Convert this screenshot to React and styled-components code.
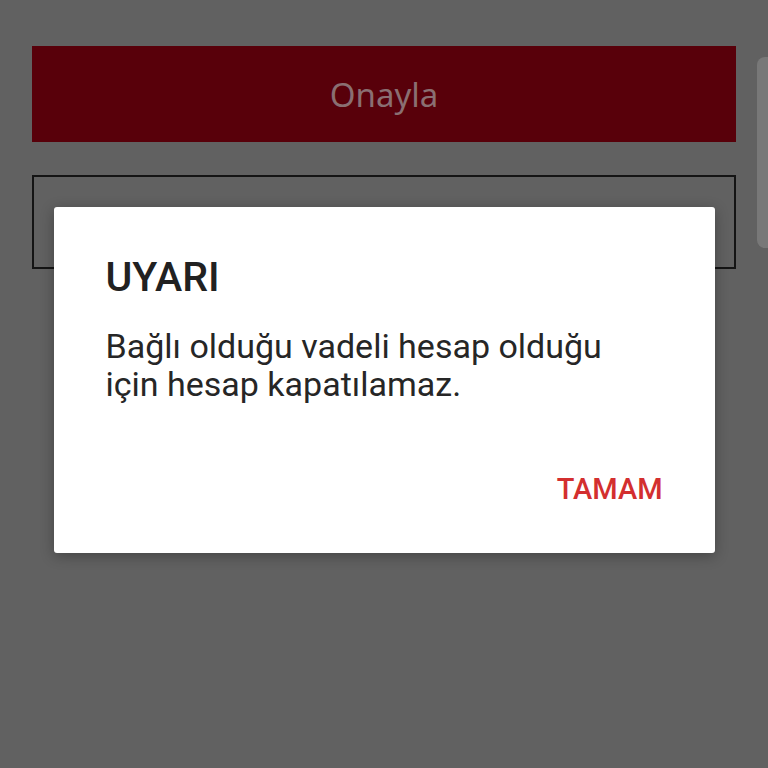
import React from "react";
import styled, { createGlobalStyle } from "styled-components";

const GlobalStyle = createGlobalStyle`
  html, body {
    margin: 0;
    padding: 0;
    background: #616161;
  }
  body {
    font-family: Roboto, "Noto Sans", sans-serif;
  }
`;

const Screen = styled.div`
  position: relative;
  width: 768px;
  height: 768px;
  overflow: hidden;
  background: #616161;
`;

const Content = styled.div`
  display: flex;
  flex-direction: column;
  gap: 33px;
  padding: 46px 32px 0 32px;
`;

const ConfirmButton = styled.div`
  height: 96px;
  background: #58000a;
  color: #8a6f72;
  font-size: 33px;
  display: flex;
  align-items: center;
  justify-content: center;
  font-family: "Noto Sans", Roboto, sans-serif;
`;

const OutlineBox = styled.div`
  height: 90px;
  border: 2px solid #141414;
`;

const ScrollEdge = styled.div`
  position: absolute;
  top: 57px;
  right: 0;
  width: 11px;
  height: 191px;
  background: #787878;
  border-radius: 8px 0 0 8px;
`;

/* modal layer: just centres the card over the form */
const Overlay = styled.div`
  position: absolute;
  inset: 0;
  display: flex;
  justify-content: center;
  align-items: flex-start;
  padding-top: 207px;
`;

const Dialog = styled.div`
  width: 661px;
  height: 346px;
  box-sizing: border-box;
  background: #fff;
  border-radius: 3px;
  box-shadow: 0 3px 14px rgba(0, 0, 0, 0.3);
  padding: 50px 54px 0 52px;
  display: flex;
  flex-direction: column;
`;

const Title = styled.h2`
  margin: 0;
  font-size: 41px;
  line-height: 40px;
  font-weight: 500;
  color: #212121;
`;

const Message = styled.p`
  margin: 30px 0 0 0;
  font-size: 34px;
  line-height: 38px;
  color: #262626;
`;

const Actions = styled.div`
  display: flex;
  justify-content: flex-end;
  margin-top: 72px;
`;

const TextButton = styled.span`
  color: #d32f2f;
  font-size: 29px;
  line-height: 29px;
  font-weight: 500;
  margin-right: -2px;
`;

export default function App() {
  return (
    <Screen>
      <GlobalStyle />
      <Content>
        <ConfirmButton>Onayla</ConfirmButton>
        <OutlineBox />
      </Content>
      <ScrollEdge />
      <Overlay>
        <Dialog>
          <Title>UYARI</Title>
          <Message>
            Bağlı olduğu vadeli hesap olduğu
            <br />
            için hesap kapatılamaz.
          </Message>
          <Actions>
            <TextButton>TAMAM</TextButton>
          </Actions>
        </Dialog>
      </Overlay>
    </Screen>
  );
}
